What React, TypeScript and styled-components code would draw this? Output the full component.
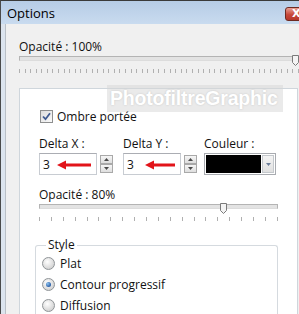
import React from "react";
import styled, { createGlobalStyle } from "styled-components";

const Global = createGlobalStyle`
  html, body { margin: 0; padding: 0; background: #f0f0f0; }
  body {
    width: 299px; height: 314px; overflow: hidden;
    font-family: "Open Sans", "Noto Sans", sans-serif;
    font-size: 12px; color: #111;
  }
  #root { width: 299px; height: 314px; }
`;

const Win = styled.div`
  position: relative;
  width: 299px;
  height: 314px;
  box-sizing: border-box;
  display: flex;
  flex-direction: column;
  border-top: 1px solid #3a3a3a;
  border-left: 1px solid #4a4a4a;
  overflow: hidden;
  background: #dce4ee;
`;

const TitleBar = styled.div`
  height: 23px;
  flex: none;
  display: flex;
  align-items: center;
  justify-content: space-between;
  padding-left: 6px;
  background: linear-gradient(#b6cce6, #c9dbef);
`;

const Title = styled.span`
  font-size: 13px;
  color: #000;
`;

const CloseBtn = styled.div`
  width: 26px;
  height: 14px;
  margin-right: -12px;
  margin-top: 2px;
  border: 1px solid #6e2a22;
  border-radius: 3px;
  background: linear-gradient(#e9a093, #c8483a 55%, #b6362a);
  display: flex;
  align-items: center;
  padding-left: 6px;
  box-sizing: border-box;
  color: #fff;
  font-weight: bold;
  font-size: 11px;
  font-family: "DejaVu Sans", sans-serif;
`;

const Frame = styled.div`
  flex: 1;
  display: flex;
  padding-left: 4px;
  min-height: 0;
`;

const Client = styled.div`
  flex: 1;
  display: flex;
  flex-direction: column;
  border-left: 1px solid #b9bfc6;
  background: #f0f0f0;
  padding: 15px 0 0 13px;
  min-width: 0;
`;

const Label = styled.div`
  font-size: 12px;
  line-height: 16px;
  height: 16px;
  white-space: nowrap;
`;

const SliderWrap = styled.div<{ $w: number }>`
  position: relative;
  width: ${(p) => p.$w}px;
  height: 20px;
  flex: none;
`;

const Track = styled.div`
  position: absolute;
  left: 0; right: 0; top: 1px;
  height: 3px;
  border: 1px solid #b4b4b4;
  border-bottom-color: #dcdcdc;
  background: #e3e3e3;
`;

const Ticks = styled.div`
  position: absolute;
  left: 0; right: 0; top: 14px;
  height: 4px;
  display: flex;
  justify-content: space-between;
`;

const Tick = styled.span`
  width: 1px;
  height: 4px;
  background: #b0b0b0;
`;

const Thumb = styled.svg`
  position: absolute;
  top: 0;
`;

function Slider({ w, value, ticks }: { w: number; value: number; ticks: number }) {
  const x = Math.round(value * (w - 7));
  return (
    <SliderWrap $w={w}>
      <Track />
      <Ticks>
        {Array.from({ length: ticks }).map((_, i) => (
          <Tick key={i} />
        ))}
      </Ticks>
      <Thumb width="7" height="11" viewBox="0 0 7 11" style={{ left: x }}>
        <path d="M0.5 0.5 H6.5 V7.5 L3.5 10.5 L0.5 7.5 Z" fill="#f4f4f4" stroke="#7a7a7a" />
      </Thumb>
    </SliderWrap>
  );
}

const Panel = styled.div`
  position: relative;
  margin-top: 13px;
  width: 279px;
  flex: 1;
  box-sizing: border-box;
  background: #fff;
  border: 1px solid #cfd6dc;
  border-bottom: none;
  padding: 21px 0 0 19px;
  display: flex;
  flex-direction: column;
`;

const CheckRow = styled.div`
  display: flex;
  align-items: center;
  gap: 4px;
  height: 13px;
  margin-left: 1px;
`;

const CheckBox = styled.div`
  width: 13px;
  height: 13px;
  box-sizing: border-box;
  border: 1px solid #8e8f8f;
  background: linear-gradient(135deg, #dcdcdc, #fafafa);
  display: flex;
  align-items: center;
  justify-content: center;
`;

const FieldsRow = styled.div`
  display: flex;
  margin-top: 13px;
`;

const Field = styled.div<{ $w: number }>`
  width: ${(p) => p.$w}px;
  display: flex;
  flex-direction: column;
  gap: 1px;
`;

const InputRow = styled.div`
  position: relative;
  display: flex;
  align-items: center;
  gap: 3px;
`;

const TextBox = styled.div`
  width: 58px;
  height: 22px;
  box-sizing: border-box;
  border: 1px solid #c8ccd2;
  border-top-color: #abadb3;
  padding-left: 3px;
  display: flex;
  align-items: center;
  font-size: 12px;
`;

const Spin = styled.div`
  width: 13px;
  height: 18px;
  display: flex;
  flex-direction: column;
`;

const SpinBtn = styled.div`
  flex: 1;
  box-sizing: border-box;
  border: 1px solid #a9a9a9;
  background: linear-gradient(#f6f6f6, #dedede);
  display: flex;
  align-items: center;
  justify-content: center;
`;

const ColorPick = styled.div`
  width: 72px;
  height: 22px;
  box-sizing: border-box;
  border: 1px solid #a8abb0;
  padding: 1px;
  display: flex;
  gap: 1px;
`;

const Swatch = styled.div`
  flex: 1;
  background: #000;
`;

const DropBtn = styled.div`
  width: 12px;
  box-sizing: border-box;
  border: 1px solid #c4c8cc;
  background: linear-gradient(#f4f4f4, #e0e0e0);
  display: flex;
  align-items: center;
  justify-content: center;
`;

const Arrow = styled.svg`
  position: absolute;
  top: 7px;
`;

const Group = styled.fieldset`
  margin: 15px 0 0 -4px;
  width: 243px;
  box-sizing: border-box;
  border: 1px solid #d5dadf;
  border-bottom: none;
  border-radius: 3px 3px 0 0;
  padding: 4px 0 0 6px;
  flex: 1;
  display: flex;
  flex-direction: column;
  gap: 7px;
`;

const Legend = styled.legend`
  padding: 0 2px;
  margin-left: 4px;
  font-size: 12px;
  line-height: 14px;
`;

const RadioRow = styled.div`
  display: flex;
  align-items: center;
  gap: 5px;
  height: 14px;
`;

const Radio = styled.div<{ $on?: boolean }>`
  width: 13px;
  height: 13px;
  box-sizing: border-box;
  border-radius: 50%;
  border: 1px solid #8f9497;
  background: radial-gradient(circle at 40% 35%, #ffffff, #d6d6d6 70%);
  display: flex;
  align-items: center;
  justify-content: center;
  &::after {
    content: "";
    display: ${(p) => (p.$on ? "block" : "none")};
    width: 5px;
    height: 5px;
    border-radius: 50%;
    background: radial-gradient(circle at 35% 35%, #8fc4f0, #1a4f9c 80%);
  }
`;

const Watermark = styled.div`
  position: absolute;
  left: 87px;
  top: -4px;
  width: 176px;
  height: 27px;
  background: rgba(214, 214, 214, 0.5);
  display: flex;
  align-items: center;
  padding-left: 3px;
  box-sizing: border-box;
  font-family: "Liberation Sans", sans-serif;
  font-weight: bold;
  font-size: 19.5px;
  letter-spacing: -0.2px;
  color: #fff;
  text-shadow: 0 0 2px #c4c4c4;
  white-space: nowrap;
  overflow: hidden;
`;

const RedArrow = ({ len, left }: { len: number; left: number }) => (
  <Arrow width={len} height="10" viewBox={`0 0 ${len} 10`} style={{ left }}>
    <rect x="7" y="3.5" width={len - 7} height="3" fill="#e2141a" />
    <polygon points="0,5 9,0.5 9,9.5" fill="#e2141a" />
  </Arrow>
);

const Spinner = () => (
  <Spin>
    <SpinBtn>
      <svg width="5" height="3" viewBox="0 0 5 3">
        <polygon points="2.5,0 5,3 0,3" fill="#4a4a4a" />
      </svg>
    </SpinBtn>
    <SpinBtn>
      <svg width="5" height="3" viewBox="0 0 5 3">
        <polygon points="0,0 5,0 2.5,3" fill="#4a4a4a" />
      </svg>
    </SpinBtn>
  </Spin>
);

export default function App() {
  return (
    <>
      <Global />
      <Win>
        <TitleBar>
          <Title>Options</Title>
          <CloseBtn>X</CloseBtn>
        </TitleBar>
        <Frame>
          <Client>
            <Label>Opacité : 100%</Label>
            <Slider w={280} value={1} ticks={51} />
            <Panel>
              <Watermark>PhotofiltreGraphic</Watermark>
              <CheckRow>
                <CheckBox>
                  <svg width="9" height="9" viewBox="0 0 9 9">
                    <path d="M1 4.5 L3.5 7.2 L8 1.2" fill="none" stroke="#3f5a90" strokeWidth="1.8" />
                  </svg>
                </CheckBox>
                <span>Ombre portée</span>
              </CheckRow>
              <FieldsRow>
                <Field $w={84}>
                  <Label>Delta X :</Label>
                  <InputRow>
                    <TextBox>3</TextBox>
                    <Spinner />
                    <RedArrow len={34} left={18} />
                  </InputRow>
                </Field>
                <Field $w={81}>
                  <Label>Delta Y :</Label>
                  <InputRow>
                    <TextBox>3</TextBox>
                    <Spinner />
                    <RedArrow len={30} left={22} />
                  </InputRow>
                </Field>
                <Field $w={80}>
                  <Label>Couleur :</Label>
                  <ColorPick>
                    <Swatch />
                    <DropBtn>
                      <svg width="5" height="3" viewBox="0 0 5 3">
                        <polygon points="0,0 5,0 2.5,3" fill="#6b7d99" />
                      </svg>
                    </DropBtn>
                  </ColorPick>
                </Field>
              </FieldsRow>
              <Label style={{ marginTop: 12 }}>Opacité : 80%</Label>
              <Slider w={239} value={0.78} ticks={21} />
              <Group>
                <Legend>Style</Legend>
                <RadioRow>
                  <Radio />
                  <span>Plat</span>
                </RadioRow>
                <RadioRow>
                  <Radio $on />
                  <span>Contour progressif</span>
                </RadioRow>
                <RadioRow>
                  <Radio />
                  <span>Diffusion</span>
                </RadioRow>
              </Group>
            </Panel>
          </Client>
        </Frame>
      </Win>
    </>
  );
}
